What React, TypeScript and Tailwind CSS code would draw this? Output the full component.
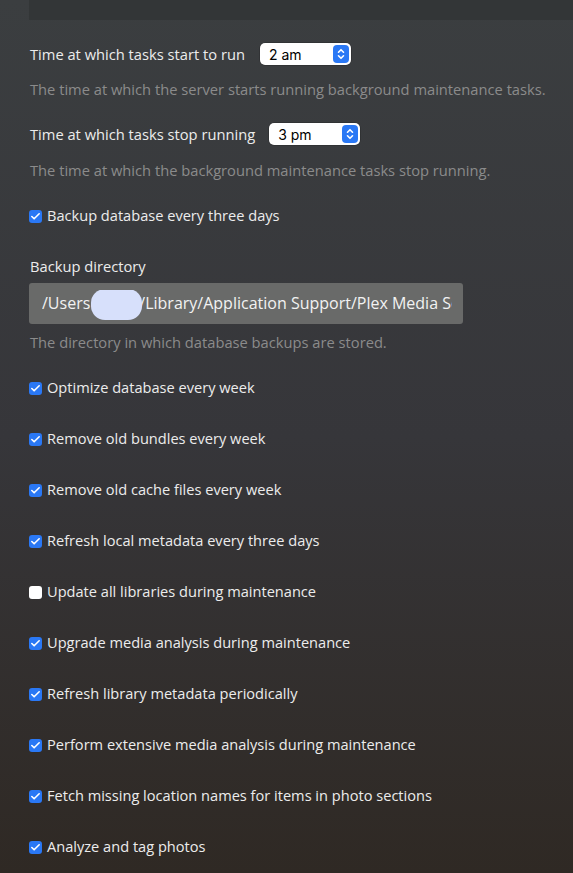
import { Check } from 'lucide-react'

const font = { fontFamily: '"Open Sans", "Noto Sans", sans-serif' }

function Stepper() {
  return (
    <span className="flex h-[18px] w-[16px] items-center justify-center rounded-[4px] bg-[#2a78f5]">
      <svg width="8" height="12" viewBox="0 0 8 12" fill="none" stroke="white" strokeWidth="1.6" strokeLinecap="round" strokeLinejoin="round">
        <path d="M1.5 4.2 L4 1.7 L6.5 4.2" />
        <path d="M1.5 7.8 L4 10.3 L6.5 7.8" />
      </svg>
    </span>
  )
}

function Select({ value }: { value: string }) {
  return (
    <div className="flex h-[22px] w-[91px] items-center justify-between rounded-[5px] bg-white pl-[9px] pr-[2px] text-[14px] text-black shadow-[0_0_0_0.5px_rgba(0,0,0,0.3)]" style={{ fontFamily: 'Inter, "Liberation Sans", sans-serif' }}>
      <span>{value}</span>
      <Stepper />
    </div>
  )
}

function CheckRow({ label, checked = true, className = '' }: { label: string; checked?: boolean; className?: string }) {
  return (
    <div className={`flex h-[20px] items-center ${className}`}>
      {checked ? (
        <span className="mr-[5px] flex h-[13px] w-[13px] items-center justify-center rounded-[3px] bg-[#2a78f5]">
          <Check size={11} strokeWidth={3.5} color="white" />
        </span>
      ) : (
        <span className="mr-[5px] h-[13px] w-[13px] rounded-[3px] bg-white" />
      )}
      <span className="whitespace-nowrap text-[14.6px] text-[#ececec]">{label}</span>
    </div>
  )
}

const tasks: [string, boolean][] = [
  ['Optimize database every week', true],
  ['Remove old bundles every week', true],
  ['Remove old cache files every week', true],
  ['Refresh local metadata every three days', true],
  ['Update all libraries during maintenance', false],
  ['Upgrade media analysis during maintenance', true],
  ['Refresh library metadata periodically', true],
  ['Perform extensive media analysis during maintenance', true],
  ['Fetch missing location names for items in photo sections', true],
  ['Analyze and tag photos', true],
]

export default function App() {
  return (
    <div className="h-[873px] w-[573px] overflow-hidden bg-gradient-to-b from-[#3b3e40] via-[#36363a] to-[#2f2924]" style={font}>
      <div className="ml-[29px] h-[20px] bg-[#333637]" />

      <div className="px-[29px]">
        <div className="mt-[23px] flex h-[22px] items-center">
          <span className="pl-[1px] text-[14.7px] text-[#ececec]">Time at which tasks start to run</span>
          <span className="ml-[15px]"><Select value="2 am" /></span>
        </div>
        <p className="mt-[14px] h-[20px] whitespace-nowrap pl-[1px] text-[14.7px] leading-[20px] text-[#8b8b8b]">
          The time at which the server starts running background maintenance tasks.
        </p>

        <div className="mt-[24px] flex h-[22px] items-center">
          <span className="pl-[1px] text-[14.7px] text-[#ececec]">Time at which tasks stop running</span>
          <span className="ml-[14px]"><Select value="3 pm" /></span>
        </div>
        <p className="mt-[15px] h-[20px] whitespace-nowrap pl-[1px] text-[14.7px] leading-[20px] text-[#8b8b8b]">
          The time at which the background maintenance tasks stop running.
        </p>

        <CheckRow label="Backup database every three days" className="mt-[26px]" />

        <div className="mt-[30px] h-[20px] pl-[1px] text-[14.7px] leading-[20px] text-[#ececec]">Backup directory</div>
        <div className="mt-[7px] flex h-[41px] w-[434px] items-center rounded-[3px] bg-[#696a69] pt-[3px] pl-[13px] pr-[11px]">
          <div className="flex-1 overflow-hidden">
            <span className="whitespace-nowrap text-[16px] text-[#f2f2f2]">
              /Users
              <span className="ml-[1px] mr-[-3px] inline-block h-[31px] w-[51px] -translate-y-[1px] rounded-[14px] bg-[#d7e0fb] align-middle" />
              /Library/Application Support/Plex Media Server
            </span>
          </div>
        </div>
        <p className="mt-[8px] h-[20px] whitespace-nowrap pl-[1px] text-[14.7px] leading-[20px] text-[#8b8b8b]">
          The directory in which database backups are stored.
        </p>

        <div className="mt-[26px] flex flex-col gap-[31px]">
          {tasks.map(([label, checked]) => (
            <CheckRow key={label} label={label} checked={checked} />
          ))}
        </div>
      </div>
    </div>
  )
}
